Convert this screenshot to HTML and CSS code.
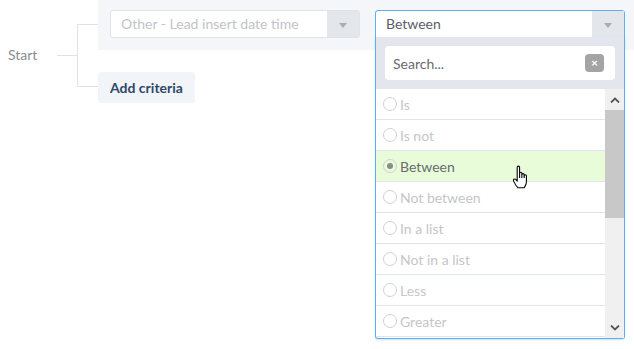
FILE: index.html
```html
<!DOCTYPE html>
<html lang="en">
  <head>
    <title>Segment rule</title>
    <meta charset="utf-8" />
    <link rel="stylesheet" href="styles.css">
  </head>

  <body>
    <div class="rule">
      <div class="start">Start</div>
      <div class="stub"></div>
      <div class="bracket"></div>
      <div class="branches">
        <div class="criteria">
          <div class="select">
            <span class="select-value muted">Other - Lead insert date time</span>
            <span class="select-arrow"></span>
          </div>
          <div class="select open">
            <span class="select-value">Between</span>
            <span class="select-arrow"></span>

            <div class="dropdown">
              <div class="search">
                <div class="search-box">
                  <span class="search-text">Search...</span>
                  <span class="search-clear">&times;</span>
                </div>
              </div>
              <div class="list-wrap">
                <ul class="options">
                  <li><span class="radio"></span>Is</li>
                  <li><span class="radio"></span>Is not</li>
                  <li class="checked">
                    <span class="radio"></span>Between
                    <svg class="cursor" width="18" height="25" viewBox="0 0 16 23">
                      <path d="M4.5 2.2C4.5 0.6 6.7 0.6 6.7 2.2V8.4V7.6C6.7 6.3 8.8 6.3 8.8 7.6V8.8C8.8 7.6 10.9 7.6 10.9 8.8V9.8C10.9 8.6 13 8.6 13 9.8V15.4C13 17.8 12 19.4 11 21H5.2C4.2 20 2 16.6 1.1 14.6C0.5 13.2 2.1 12.3 3.1 13.3L4.5 14.8Z" fill="#fff" stroke="#000" stroke-width="1" stroke-linejoin="round"/>
                      <path d="M6.7 8.4V12M8.8 8.8V12M10.9 9.8V12" stroke="#000" stroke-width="1"/>
                    </svg>
                  </li>
                  <li><span class="radio"></span>Not between</li>
                  <li><span class="radio"></span>In a list</li>
                  <li><span class="radio"></span>Not in a list</li>
                  <li><span class="radio"></span>Less</li>
                  <li><span class="radio"></span>Greater</li>
                </ul>
                <div class="scrollbar">
                  <div class="scroll-btn">
                    <svg width="10" height="6" viewBox="0 0 10 6"><polyline points="1,5.5 5,1.5 9,5.5" fill="none" stroke="#555" stroke-width="1.8"/></svg>
                  </div>
                  <div class="scroll-thumb"></div>
                  <div class="scroll-fill"></div>
                  <div class="scroll-btn">
                    <svg width="10" height="6" viewBox="0 0 10 6"><polyline points="1,0.5 5,4.5 9,0.5" fill="none" stroke="#555" stroke-width="1.8"/></svg>
                  </div>
                </div>
              </div>
            </div>
          </div>
        </div>
        <button type="button" class="add-btn">Add criteria</button>
      </div>
    </div>
  </body>
</html>
```

FILE: styles.css
```css
html,
body {
  height: 100%;
}

body {
  margin: 0;
  font-family: Lato, "Open Sans", Arial, sans-serif;
  font-size: 14px;
  color: #555;
  background: #fff;
}

.rule {
  display: flex;
  align-items: flex-start;
  min-height: 349px;
  overflow: hidden;
}

.start {
  flex-shrink: 0;
  width: 49px;
  padding: 46px 0 0 8px;
  line-height: 18px;
  color: #8a8d92;
}

.stub {
  flex-shrink: 0;
  width: 20px;
  margin-top: 55px;
  border-top: 1px solid #dfe3e8;
}

.bracket {
  flex-shrink: 0;
  width: 20px;
  height: 61px;
  margin-top: 24px;
  border: 1px solid #dfe3e8;
  border-right: 0;
}

.branches {
  flex: 1;
  min-width: 0;
  display: flex;
  flex-direction: column;
  align-items: flex-start;
}

.criteria {
  align-self: stretch;
  display: flex;
  gap: 15px;
  height: 50px;
  padding: 10px 12px;
  box-sizing: border-box;
  background: #f5f6f9;
}

.select {
  position: relative;
  flex-shrink: 0;
  display: flex;
  width: 250px;
  height: 28px;
  box-sizing: border-box;
  border: 1px solid #e0e3e9;
  border-radius: 3px;
  background: #fff;
}

.select-value {
  flex: 1;
  padding-left: 10px;
  line-height: 26px;
  color: #5a5e66;
}

.select-value.muted {
  color: #c1c4ca;
}

.select-arrow {
  width: 32px;
  background: #e3e6eb;
  display: flex;
  align-items: center;
  justify-content: center;
}

.select-arrow::after {
  content: "";
  border-left: 4px solid transparent;
  border-right: 4px solid transparent;
  border-top: 5px solid #a8acb4;
  margin-top: 2px;
}

.select.open {
  border-color: #62acf2;
  border-radius: 3px 3px 0 0;
}

.dropdown {
  position: absolute;
  top: 100%;
  left: -1px;
  right: -1px;
  height: 302px;
  box-sizing: border-box;
  border: 1px solid #62acf2;
  border-top: 0;
  border-radius: 0 0 3px 3px;
  background: #fff;
  display: flex;
  flex-direction: column;
  box-shadow: 0 1px 2px rgba(98, 172, 242, 0.35);
}

.search {
  height: 52px;
  padding: 9px 9px 9px;
  box-sizing: border-box;
  background: #e3e6ec;
}

.search-box {
  display: flex;
  align-items: center;
  height: 100%;
  padding: 0 11px 0 8px;
  border-radius: 4px;
  background: #fff;
}

.search-text {
  flex: 1;
  color: #666a70;
}

.search-clear {
  width: 19px;
  height: 18px;
  border-radius: 4px;
  background: #a4a4a4;
  color: #fff;
  font-size: 12px;
  font-weight: bold;
  line-height: 18px;
  text-align: center;
}

.list-wrap {
  flex: 1;
  display: flex;
  min-height: 0;
}

.options {
  flex: 1;
  margin: 0;
  padding: 0;
  list-style: none;
  overflow: hidden;
}

.options li {
  position: relative;
  display: flex;
  align-items: center;
  gap: 3px;
  height: 30px;
  padding-left: 7px;
  border-bottom: 1px solid #e1e6ee;
  color: #c4c6ca;
}

.options li.checked {
  background: #e9fcda;
  color: #686b70;
}

.radio {
  width: 12px;
  height: 12px;
  border: 1.5px solid #cfd1d4;
  border-radius: 50%;
  display: flex;
  align-items: center;
  justify-content: center;
}

.checked .radio::after {
  content: "";
  width: 6px;
  height: 6px;
  border-radius: 50%;
  background: #8c8c8c;
}

.cursor {
  position: absolute;
  left: 136px;
  top: 14px;
}

.scrollbar {
  width: 19px;
  display: flex;
  flex-direction: column;
  background: #f0f0f0;
}

.scroll-btn {
  height: 21px;
  display: flex;
  align-items: center;
  justify-content: center;
}

.scroll-thumb {
  height: 108px;
  background: #c8c8c8;
}

.scroll-fill {
  flex: 1;
}

.add-btn {
  margin-top: 22px;
  height: 31px;
  padding: 0 12px;
  border: 0;
  border-radius: 3px;
  background: #f1f5fa;
  color: #2e4866;
  font-family: Lato, "Open Sans", Arial, sans-serif;
  font-size: 14px;
  font-weight: bold;
}
```
